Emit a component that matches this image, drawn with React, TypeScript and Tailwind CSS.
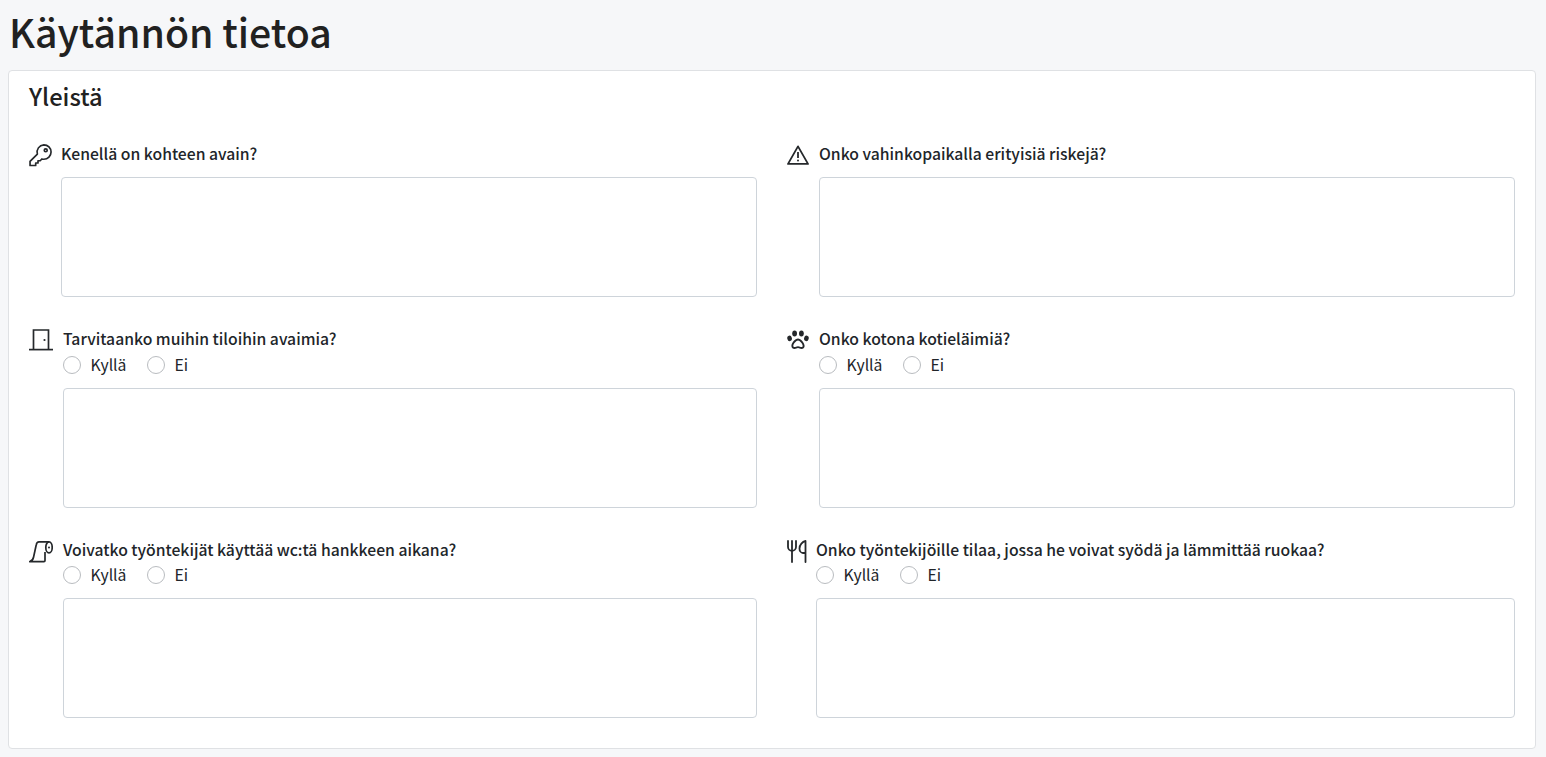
import type { ReactNode } from 'react';

const KeyIcon = () => (
  <svg width="23" height="23" viewBox="0 0 22 22" fill="none" stroke="#25282b" strokeWidth="1.6" strokeLinejoin="round" strokeLinecap="round">
    <path d="M14.2 0.8a6.9 6.9 0 0 1 0 13.8c-.7 0-1.3-.1-1.9-.3l-1.6 1.7H8.6v2.2H6.4V20.6H1V16.6l7-7a6.9 6.9 0 0 1 6.2-8.8Z" />
    <circle cx="16" cy="6" r="1.4" />
  </svg>
);

const WarningIcon = () => (
  <svg width="22" height="20" viewBox="0 0 22 20" fill="none" stroke="#25282b" strokeWidth="1.8" strokeLinejoin="round">
    <path d="M11 1.4 21 18.9H1Z" />
    <path d="M11 7v6" />
    <circle cx="11" cy="15.6" r="1" fill="#25282b" stroke="none" />
  </svg>
);

const DoorIcon = () => (
  <svg width="24" height="22" viewBox="0 0 24 22" fill="none" stroke="#25282b" strokeWidth="1.7">
    <path d="M0 20.6h24" />
    <path d="M4.5 20.6V1h15v19.6" />
    <circle cx="15.5" cy="11" r="1.1" fill="#25282b" stroke="none" />
  </svg>
);

const PawIcon = () => (
  <svg width="22" height="20" viewBox="0 0 22 20" fill="#25282b">
    <ellipse cx="2.6" cy="8.4" rx="2.3" ry="2.8" transform="rotate(-15 2.6 8.4)" />
    <ellipse cx="7.6" cy="3.4" rx="2.4" ry="3" />
    <ellipse cx="14.4" cy="3.4" rx="2.4" ry="3" />
    <ellipse cx="19.4" cy="8.4" rx="2.3" ry="2.8" transform="rotate(15 19.4 8.4)" />
    <path
      fillRule="evenodd"
      d="M11 8.6c2.8 0 6.6 4.2 6.6 7.4 0 2-1.5 2.9-3.1 2.9-1.4 0-2.3-.8-3.5-.8s-2.1.8-3.5.8c-1.6 0-3.1-.9-3.1-2.9 0-3.2 3.8-7.4 6.6-7.4Zm0 2c-1.7 0-4.7 3.2-4.7 5.4 0 .8.6 1 1.2 1 .9 0 1.9-.8 3.5-.8s2.6.8 3.5.8c.6 0 1.2-.2 1.2-1 0-2.2-3-5.4-4.7-5.4Z"
    />
  </svg>
);

const PaperIcon = () => (
  <svg width="24" height="22" viewBox="0 0 24 22" fill="none" stroke="#25282b" strokeWidth="1.7" strokeLinejoin="round">
    <path d="M20 .9H10C8.2.9 7.5 2.2 7.2 4L4.6 16c-.4 2-1.6 4-3.8 4.6H15c.6 0 1-.4 1-1V11" />
    <ellipse cx="20" cy="6.4" rx="3.2" ry="5.5" />
    <circle cx="20" cy="6.4" r="1" fill="#25282b" stroke="none" />
  </svg>
);

const CutleryIcon = () => (
  <svg width="20" height="23" viewBox="0 0 20 23" fill="none" stroke="#25282b" strokeWidth="1.8" strokeLinecap="round" strokeLinejoin="round">
    <path d="M1 1v6c0 2 1.8 3.8 4 3.8S9 9 9 7V1" />
    <path d="M5 1v21" />
    <path d="M18.5 22V1c-3 .6-6 3.8-6 7.4 0 2.4 1.4 4.6 3.4 4.6h2.6" />
  </svg>
);

function Options() {
  return (
    <div className="flex h-[25.5px] items-end text-[#212529]">
      <label className="flex items-center">
        <span className="h-[18px] w-[18px] rounded-full border border-[#b9bcc0] bg-white" />
        <span className="ml-[9.6px] text-[15.75px] leading-6">Kyllä</span>
      </label>
      <label className="ml-[20.4px] flex items-center">
        <span className="h-[18px] w-[18px] rounded-full border border-[#b9bcc0] bg-white" />
        <span className="ml-[9.6px] text-[15.75px] leading-6">Ei</span>
      </label>
    </div>
  );
}

function Question({
  icon,
  iconClass,
  label,
  choice = false,
}: {
  icon: ReactNode;
  iconClass: string;
  label: string;
  choice?: boolean;
}) {
  return (
    <div className="flex">
      <div className={`${iconClass} flex h-[24px] shrink-0 items-center`}>{icon}</div>
      <div className="min-w-0 flex-1">
        <div className={`${choice ? 'leading-6' : 'leading-[22px]'} h-[24px] text-[15.72px] font-medium`}>{label}</div>
        {choice && <Options />}
        <div className={`${choice ? 'mt-[11.1px]' : 'mt-[10px]'} h-[120px] rounded-[4px] border border-[#ced4da] bg-white`} />
      </div>
    </div>
  );
}

export default function App() {
  return (
    <div className="min-h-[757px] bg-[#f6f7f9] pr-[10px] pl-2 font-['Noto_Sans_CJK_SC',sans-serif] text-[#212529]">
      <h1 className="pt-[4px] pb-[12px] pl-px text-[39.2px] leading-[54px] font-medium text-[#212121]">Käytännön tietoa</h1>
      <div className="rounded-[4px] border border-[#dfe1e4] bg-white px-5 pt-[9px] pb-[30px]">
        <h2 className="text-[23.7px] leading-[32px] font-medium text-[#212121]">Yleistä</h2>
        <div className="mt-[31px] grid grid-cols-2 gap-x-[30px] gap-y-[30px]">
          <Question icon={<KeyIcon />} iconClass="w-[32px]" label="Kenellä on kohteen avain?" />
          <Question icon={<WarningIcon />} iconClass="w-[32px]" label="Onko vahinkopaikalla erityisiä riskejä?" />
          <Question icon={<DoorIcon />} iconClass="w-[34px] pt-[1px]" label="Tarvitaanko muihin tiloihin avaimia?" choice />
          <Question icon={<PawIcon />} iconClass="w-[32px] pt-[2px]" label="Onko kotona kotieläimiä?" choice />
          <Question icon={<PaperIcon />} iconClass="w-[34px] pt-[4px]" label="Voivatko työntekijät käyttää wc:tä hankkeen aikana?" choice />
          <Question icon={<CutleryIcon />} iconClass="w-[29px] pt-[4px]" label="Onko työntekijöille tilaa, jossa he voivat syödä ja lämmittää ruokaa?" choice />
        </div>
      </div>
    </div>
  );
}
